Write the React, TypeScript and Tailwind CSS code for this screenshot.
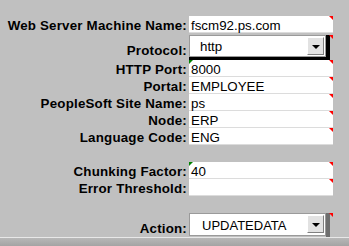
import React from "react";

const RedMark = () => (
  <div className="absolute top-0 right-0 w-0 h-0 border-t-[4px] border-l-[4px] border-t-[#ff0000] border-l-transparent" />
);
const GreenMark = () => (
  <div className="absolute top-0 left-0 w-0 h-0 border-t-[4px] border-r-[4px] border-t-[#008000] border-r-transparent" />
);

function Label({ text, select }: { text: string; select?: boolean }) {
  return (
    <div
      className={`w-[187px] mr-[2px] text-right font-bold text-[13.33px] leading-[20px] tracking-[0.2px] text-black whitespace-nowrap ${
        select ? "pt-[6px]" : ""
      }`}
    >
      {text}
    </div>
  );
}

function TextRow({ label, value, green }: { label: string; value: string; green?: boolean }) {
  return (
    <div className="flex h-[17px]">
      <Label text={label} />
      <div className="relative w-[144px] h-[17px] bg-white border-b border-[#dcdcdc]">
        <div className="pl-[2px] text-[13.33px] leading-[20px] text-black whitespace-nowrap h-[16px] overflow-visible">
          {value}
        </div>
        <RedMark />
        {green && <GreenMark />}
      </div>
    </div>
  );
}

function DropButton() {
  return (
    <div className="absolute right-[1px] top-[1px] w-[17px] h-[18px] bg-[#e2e2e2] border-t border-l border-t-white border-l-white border-b border-r border-b-[#808080] border-r-[#808080] flex items-center justify-center">
      <div className="w-0 h-0 border-l-[4px] border-r-[4px] border-t-[4px] border-l-transparent border-r-transparent border-t-black mt-[1px]" />
    </div>
  );
}

export default function App() {
  return (
    <div className="w-[349px] h-[246px] bg-[#c0c0c0] font-['Liberation_Sans',Arial,sans-serif] flex flex-col overflow-hidden">
      <div className="pt-[16px] flex flex-col flex-1">
        <div className="mb-[2px]">
          <TextRow label="Web Server Machine Name:" value="fscm92.ps.com" />
        </div>

        {/* Protocol select */}
        <div className="flex h-[25px]">
          <Label text="Protocol:" select />
          <div className="relative w-[144px] h-[25px]">
            <div className="w-[141px] h-[25px] border-r-[4px] border-b-[3px] border-black">
              <div className="relative w-[137px] h-[22px] bg-white border border-[#9a9a9a]">
                <div className="pl-[10px] text-[13.33px] leading-[20px] text-black pt-[1px]">http</div>
                <DropButton />
              </div>
            </div>
            <RedMark />
          </div>
        </div>

        <TextRow label="HTTP Port:" value="8000" green />
        <TextRow label="Portal:" value="EMPLOYEE" />
        <TextRow label="PeopleSoft Site Name:" value="ps" />
        <TextRow label="Node:" value="ERP" />
        <TextRow label="Language Code:" value="ENG" />

        <div className="h-[17px]" />

        <TextRow label="Chunking Factor:" value="40" green />
        <TextRow label="Error Threshold:" value="" />

        <div className="h-[17px]" />

        {/* Action select */}
        <div className="flex h-[24px]">
          <Label text="Action:" select />
          <div className="relative w-[144px] h-[24px]">
            <div className="w-[141px] h-[24px] border-r-[4px] border-[#6e6e6e] border-t-0 border-l-0 border-b-0">
              <div className="relative w-[137px] h-[23px] bg-white border border-[#9a9a9a]">
                <div className="pl-[12px] text-[13px] leading-[20px] text-black pt-[2px]">UPDATEDATA</div>
                <DropButton />
              </div>
            </div>
            <RedMark />
          </div>
        </div>
      </div>
      <div className="h-[9px] border-t border-[#e8e8e8] bg-gradient-to-b from-[#b8b8b8] to-[#a4a4a4]" />
    </div>
  );
}
